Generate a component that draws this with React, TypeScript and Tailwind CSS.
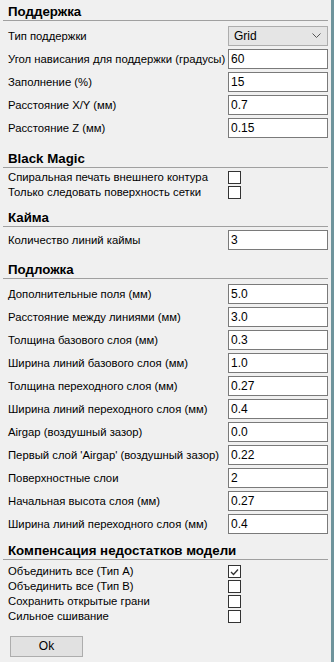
import React from "react";

type Row = { label: string; value: string };

const support: Row[] = [
  { label: "Угол нависания для поддержки (градусы)", value: "60" },
  { label: "Заполнение (%)", value: "15" },
  { label: "Расстояние X/Y (мм)", value: "0.7" },
  { label: "Расстояние Z (мм)", value: "0.15" },
];

const raft: Row[] = [
  { label: "Дополнительные поля (мм)", value: "5.0" },
  { label: "Расстояние между линиями (мм)", value: "3.0" },
  { label: "Толщина базового слоя (мм)", value: "0.3" },
  { label: "Ширина линий базового слоя (мм)", value: "1.0" },
  { label: "Толщина переходного слоя (мм)", value: "0.27" },
  { label: "Ширина линий переходного слоя (мм)", value: "0.4" },
  { label: "Airgap (воздушный зазор)", value: "0.0" },
  { label: "Первый слой 'Airgap' (воздушный зазор)", value: "0.22" },
  { label: "Поверхностные слои", value: "2" },
  { label: "Начальная высота слоя (мм)", value: "0.27" },
  { label: "Ширина линий переходного слоя (мм)", value: "0.4" },
];

const Header = ({ title, className = "" }: { title: string; className?: string }) => (
  <div className={className}>
    <div className="h-[16px] pl-[8px] text-[13.3px] font-bold leading-[16px] text-black">{title}</div>
    <div className="mx-[3px] border-b border-[#a0a0a0]" />
  </div>
);

const InputRow = ({ label, value }: Row) => (
  <div className="flex h-[20px] items-center">
    <div className="w-[228px] whitespace-nowrap pl-[8px]">{label}</div>
    <div className="flex h-[20px] w-[100px] items-center border border-[#7a7a7a] bg-white pl-[2px] text-[12px]">
      {value}
    </div>
  </div>
);

const CheckRow = ({ label, checked = false }: { label: string; checked?: boolean }) => (
  <div className="flex h-[15px] items-center">
    <div className="w-[228px] whitespace-nowrap pl-[8px]">{label}</div>
    <div className="flex h-[13px] w-[13px] items-center justify-center border border-[#333333] bg-white">
      {checked && (
        <svg width="9" height="8" viewBox="0 0 9 8">
          <path d="M1 4 L3.5 6.5 L8 1.5" fill="none" stroke="#333333" strokeWidth="1.3" />
        </svg>
      )}
    </div>
  </div>
);

export default function App() {
  return (
    <div className="flex h-[662px] w-[334px] bg-[#f0f0f0] font-['Liberation_Sans',sans-serif] text-[11.3px] leading-[15px] text-black">
      <div className="flex w-[331px] flex-col pt-[4px]">
        <Header title="Поддержка" />
        <div className="mt-[5px] flex flex-col gap-[3px]">
          <div className="flex h-[20px] items-center">
            <div className="w-[228px] whitespace-nowrap pl-[8px]">Тип поддержки</div>
            <div className="flex h-[20px] w-[100px] items-center justify-between border border-[#adadad] bg-[#e5e5e5] pl-[5px] pr-[6px] text-[12px]">
              <span>Grid</span>
              <svg width="9" height="6" viewBox="0 0 9 6">
                <path d="M0.5 0.5 L4.5 4.5 L8.5 0.5" fill="none" stroke="#555555" strokeWidth="1" />
              </svg>
            </div>
          </div>
          {support.map((r, i) => (
            <InputRow key={i} {...r} />
          ))}
        </div>

        <Header title="Black Magic" className="mt-[13px]" />
        <div className="mt-[2px] flex flex-col">
          <CheckRow label="Спиральная печать внешнего контура" />
          <CheckRow label="Только следовать поверхность сетки" />
        </div>

        <Header title="Кайма" className="mt-[10px]" />
        <div className="mt-[3px]">
          <InputRow label="Количество линий каймы" value="3" />
        </div>

        <Header title="Подложка" className="mt-[12px]" />
        <div className="mt-[5px] flex flex-col gap-[3px]">
          {raft.map((r, i) => (
            <InputRow key={i} {...r} />
          ))}
        </div>

        <Header title="Компенсация недостатков модели" className="mt-[9px]" />
        <div className="mt-[4px] flex flex-col">
          <CheckRow label="Объединить все (Тип A)" checked />
          <CheckRow label="Объединить все (Тип B)" />
          <CheckRow label="Сохранить открытые грани" />
          <CheckRow label="Сильное сшивание" />
        </div>

        <div className="mt-[12px] pl-[10px]">
          <button className="flex h-[21px] w-[73px] items-center justify-center border border-[#adadad] bg-[#e1e1e1] text-[12px]">
            Ok
          </button>
        </div>
      </div>
      <div className="w-[3px] bg-[#6f949c]" />
    </div>
  );
}
